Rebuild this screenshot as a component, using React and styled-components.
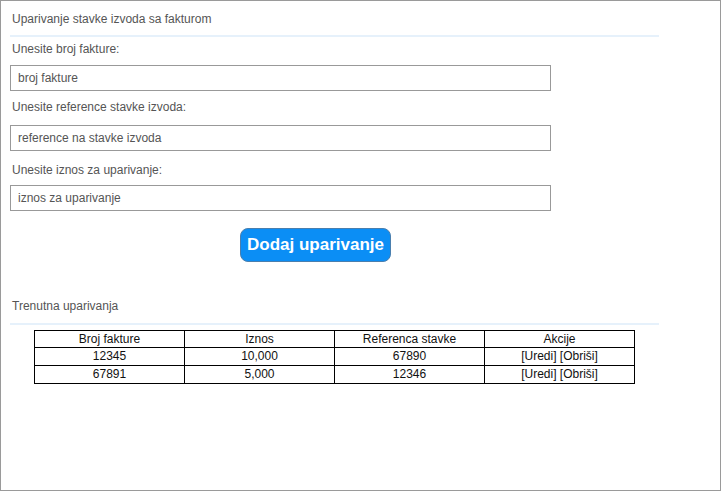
import React from "react";
import styled, { createGlobalStyle } from "styled-components";

const Global = createGlobalStyle`
  html, body { margin: 0; padding: 0; background: #fff; }
  body { font-family: "Liberation Sans", Arial, sans-serif; }
  * { box-sizing: border-box; }
`;

const Frame = styled.div`
  width: 721px;
  height: 491px;
  border: 1px solid #9a9a9a;
  background: #fff;
  display: flex;
  flex-direction: column;
  font-family: "Liberation Sans", Arial, sans-serif;
`;

const SectionTitle = styled.div`
  font-size: 12px;
  line-height: 14px;
  color: #555;
  padding-left: 11px;
  margin-top: ${(p) => p.$top}px;
`;

const Divider = styled.div`
  width: 649px;
  height: 2px;
  margin-left: 9px;
  margin-top: ${(p) => p.$top}px;
  background: #e6f1fb;
`;

const Form = styled.div`
  display: flex;
  flex-direction: column;
  padding-left: 9px;
`;

const Label = styled.label`
  font-size: 12px;
  line-height: 14px;
  color: #555;
  padding-left: 2px;
  margin-top: ${(p) => p.$top}px;
  margin-bottom: ${(p) => p.$bottom}px;
`;

const Input = styled.input`
  width: 541px;
  height: 26px;
  border: 1px solid #999;
  padding: 0 7px;
  font-family: "Liberation Sans", Arial, sans-serif;
  font-size: 12px;
  color: #555;
  outline: none;
  &::placeholder { color: #555; opacity: 1; }
`;

const ButtonRow = styled.div`
  display: flex;
  padding-left: 239px;
  margin-top: 17px;
`;

const Button = styled.button`
  width: 151px;
  height: 34px;
  border-radius: 8px;
  border: 1px solid #4a7fae;
  background: #0b8ef5;
  color: #fff;
  font-family: "Liberation Sans", Arial, sans-serif;
  font-weight: bold;
  font-size: 17px;
  padding: 0;
  cursor: pointer;
`;

const TableWrap = styled.div`
  padding-left: 33px;
  margin-top: 5px;
`;

const Table = styled.table`
  width: 601px;
  border-collapse: collapse;
  font-size: 12px;
  color: #111;
`;

const Cell = styled.td`
  border: 1px solid #000;
  text-align: center;
  height: ${(p) => (p.$head ? 17 : 18)}px;
  padding: 0;
  width: 150px;
  line-height: 15px;
  font-weight: normal;
`;

const rows = [
  ["12345", "10,000", "67890"],
  ["67891", "5,000", "12346"],
];

export default function App() {
  return (
    <>
      <Global />
      <Frame>
        <SectionTitle $top={11}>Uparivanje stavke izvoda sa fakturom</SectionTitle>
        <Divider $top={9} />
        <Form>
          <Label $top={5} $bottom={9}>Unesite broj fakture:</Label>
          <Input placeholder="broj fakture" />
          <Label $top={9} $bottom={11}>Unesite reference stavke izvoda:</Label>
          <Input placeholder="reference na stavke izvoda" />
          <Label $top={12} $bottom={8}>Unesite iznos za uparivanje:</Label>
          <Input placeholder="iznos za uparivanje" />
        </Form>
        <ButtonRow>
          <Button>Dodaj uparivanje</Button>
        </ButtonRow>
        <SectionTitle $top={37}>Trenutna uparivanja</SectionTitle>
        <Divider $top={10} />
        <TableWrap>
          <Table>
            <thead>
              <tr>
                <Cell as="th" $head>Broj fakture</Cell>
                <Cell as="th" $head>Iznos</Cell>
                <Cell as="th" $head>Referenca stavke</Cell>
                <Cell as="th" $head>Akcije</Cell>
              </tr>
            </thead>
            <tbody>
              {rows.map((r) => (
                <tr key={r[0]}>
                  <Cell>{r[0]}</Cell>
                  <Cell>{r[1]}</Cell>
                  <Cell>{r[2]}</Cell>
                  <Cell>[Uredi] [Obriši]</Cell>
                </tr>
              ))}
            </tbody>
          </Table>
        </TableWrap>
      </Frame>
    </>
  );
}
